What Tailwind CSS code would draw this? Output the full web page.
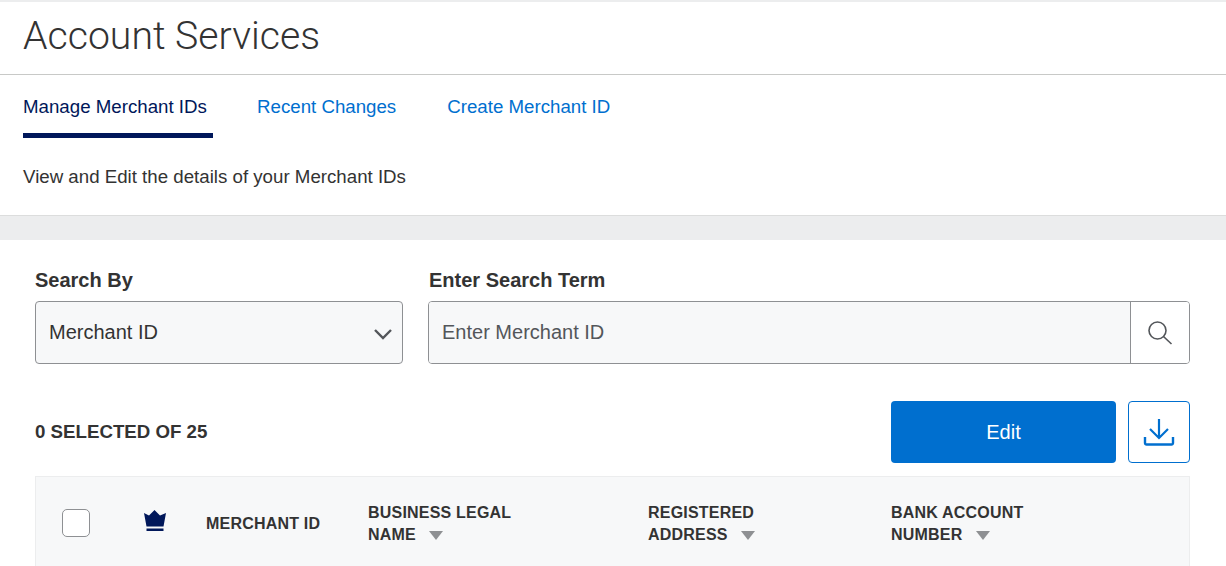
<!DOCTYPE html>
<html lang="en">
<head>
  <meta charset="UTF-8">
  <title>Account Services</title>
  <script src="https://cdn.jsdelivr.net/npm/@tailwindcss/browser@4"></script>
</head>
<body class="bg-white font-['Liberation_Sans',Arial,sans-serif] text-[#333] h-[566px] overflow-hidden">
  <!-- page header -->
  <div class="h-[2px] bg-[#ecedee]"></div>
  <header class="h-[73px] border-b border-[#c8c9c7] pl-[23px]">
    <h1 class="font-['Roboto',sans-serif] font-light text-[39.2px] leading-[68px] text-[#333]">Account Services</h1>
  </header>
  <nav class="flex pl-[23px] h-[63px] text-[18.7px]">
    <a class="w-[190px] h-[63px] border-b-[5px] border-[#00175a] text-[#00175a] leading-[64px]">Manage Merchant IDs</a>
    <a class="ml-[44px] text-[#006fcf] leading-[64px]">Recent Changes</a>
    <a class="ml-[51px] text-[#006fcf] leading-[64px]">Create Merchant ID</a>
  </nav>
  <p class="pl-[23px] h-[77px] text-[18.7px] leading-[78px]">View and Edit the details of your Merchant IDs</p>
  <div class="h-[25px] bg-[#ecedee] border-t border-[#dcdddd]"></div>

  <main class="pl-[35px] pr-[36px]">
    <!-- search -->
    <div class="flex gap-[25px] pt-[28px]">
      <div class="w-[368px]">
        <label class="block font-bold text-[20px] leading-[24px] mb-[9px]">Search By</label>
        <div class="flex items-center justify-between h-[63px] px-[13px] bg-[#f7f8f9] border border-[#8e9093] rounded text-[20px]">
          <span class="mb-[2px]">Merchant ID</span>
          <svg class="w-[20px] h-[12px] -mr-[4px] mt-[3px]" viewBox="0 0 20 12" fill="none" stroke="#53565a" stroke-width="2.4"><path d="M2 2l8 8 8-8"/></svg>
        </div>
      </div>
      <div class="flex-1">
        <label class="block pl-[1px] font-bold text-[20px] leading-[24px] mb-[9px]">Enter Search Term</label>
        <div class="flex h-[63px] border border-[#8e9093] rounded overflow-hidden text-[20px]">
          <span class="flex-1 flex items-center px-[13px] pb-[2px] bg-[#f7f8f9] text-[#53565a]">Enter Merchant ID</span>
          <span class="w-[59px] flex items-center justify-center border-l border-[#8e9093] bg-white">
            <svg class="w-[26px] h-[26px]" viewBox="0 0 26 26" fill="none" stroke="#53565a" stroke-width="1.6"><circle cx="10.500" cy="10.500" r="8.500"/><path d="M16.500 16.500l8 7.500"/></svg>
          </span>
        </div>
      </div>
    </div>

    <!-- selection + actions -->
    <div class="flex items-center h-[62px] mt-[37px]">
      <span class="font-bold text-[18.7px] flex-1">0 SELECTED OF 25</span>
      <button class="w-[225px] h-[62px] bg-[#006fcf] text-white text-[20px] rounded">Edit</button>
      <button class="w-[62px] h-[62px] ml-[12px] border border-[#006fcf] rounded flex items-center justify-center">
        <svg class="w-[32px] h-[28px]" viewBox="0 0 32 28" fill="none" stroke="#006fcf" stroke-width="2.2"><path d="M16 1v18M7 11l9 9 9-9"/><path d="M2 19v6a1.5 1.5 0 0 0 1.500 1.500h25A1.500 1.500 0 0 0 30 25v-6" stroke-width="2.400"/></svg>
      </button>
    </div>

    <!-- table head -->
    <div class="flex items-center h-[100px] mt-[13px] pb-[4px] bg-[#f7f8f9] border border-[#ecedee] font-bold text-[16px] leading-[22px] tracking-[0.2px]">
      <span class="ml-[26px] mb-[2px] w-[28px] h-[28px] bg-white border border-[#8e9093] rounded-[5px]"></span>
      <svg class="ml-[54px] mb-[6px] w-[22px] h-[22px]" viewBox="0 0 22 22" fill="#00175a"><path d="M0 3l5 2.500L10.500 0 16 5.500 22 3l-2.500 13.500h-17z"/><rect x="2.500" y="18.500" width="17" height="2.500"/></svg>
      <span class="ml-[40px] w-[162px]">MERCHANT ID</span>
      <span class="w-[280px]">BUSINESS LEGAL<br>NAME <i class="inline-block ml-[8px] border-x-[7px] border-t-[9px] border-x-transparent border-t-[#8e9093]"></i></span>
      <span class="w-[243px]">REGISTERED<br>ADDRESS <i class="inline-block ml-[9px] border-x-[7px] border-t-[9px] border-x-transparent border-t-[#8e9093]"></i></span>
      <span>BANK ACCOUNT<br>NUMBER <i class="inline-block ml-[9px] border-x-[7px] border-t-[9px] border-x-transparent border-t-[#8e9093]"></i></span>
    </div>
  </main>
</body>
</html>
